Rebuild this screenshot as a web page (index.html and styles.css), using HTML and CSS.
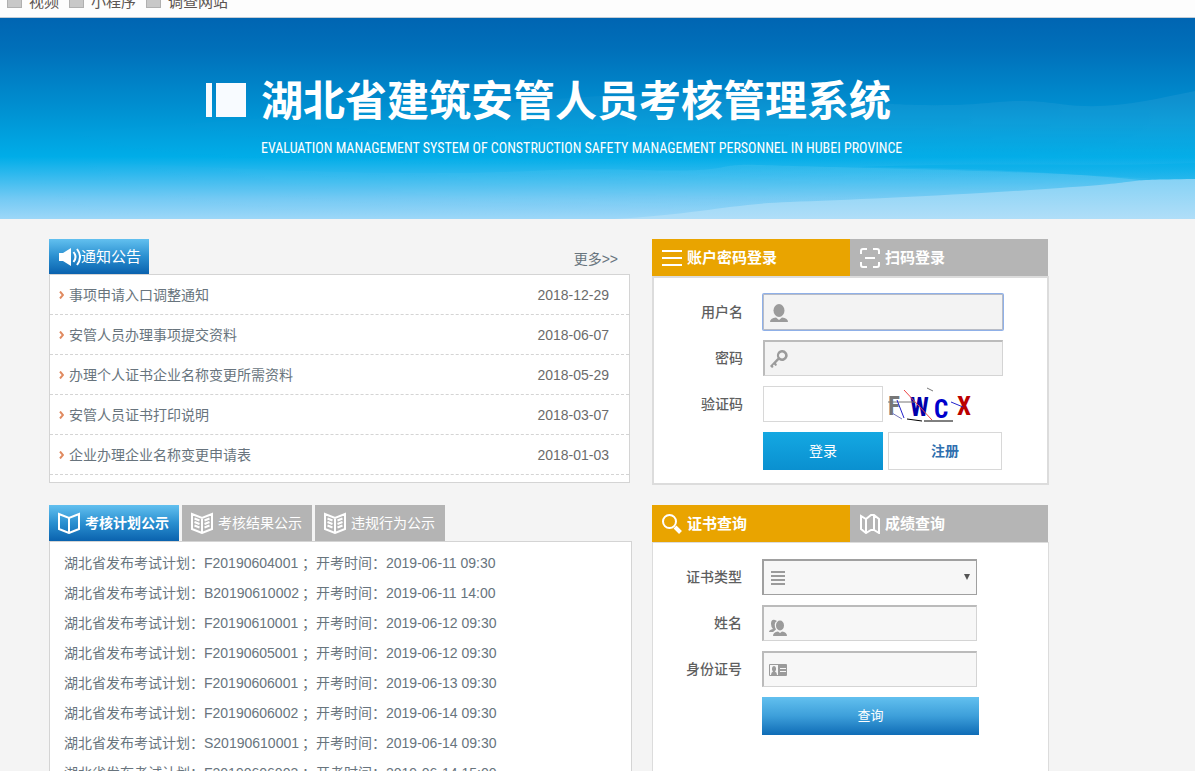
FILE: index.html
```html
<!DOCTYPE html>
<html lang="zh-CN">
<head>
<meta charset="utf-8">
<meta name="viewport" content="width=device-width, initial-scale=1">
<title>湖北省建筑安管人员考核管理系统</title>
<link rel="stylesheet" href="styles.css">
</head>
<body>
<nav class="bookmarks">
  <a class="bookmark" href="#"><span class="bookmark-icon"></span>视频</a>
  <a class="bookmark" href="#"><span class="bookmark-icon"></span>小程序</a>
  <a class="bookmark" href="#"><span class="bookmark-icon"></span>调查网站</a>
</nav>

<header class="hero">
  <svg class="hero-art" viewBox="0 0 1195 201" preserveAspectRatio="none" aria-hidden="true">
    <defs>
      <linearGradient id="sky" x1="0" y1="0" x2="0" y2="1">
        <stop offset="0" stop-color="#0065b2"/>
        <stop offset="0.16" stop-color="#0070ba"/>
        <stop offset="0.45" stop-color="#0090d1"/>
        <stop offset="0.69" stop-color="#00ade8"/>
        <stop offset="0.78" stop-color="#30b9ee"/>
        <stop offset="0.9" stop-color="#74caf4"/>
        <stop offset="1" stop-color="#9dd7f8"/>
      </linearGradient>
      <linearGradient id="far" gradientUnits="userSpaceOnUse" x1="0" y1="60" x2="0" y2="150">
        <stop offset="0" stop-color="#fff" stop-opacity="0.06"/>
        <stop offset="0.5" stop-color="#fff" stop-opacity="0.06"/>
        <stop offset="1" stop-color="#fff" stop-opacity="0"/>
      </linearGradient>
      <linearGradient id="mid" gradientUnits="userSpaceOnUse" x1="0" y1="146" x2="0" y2="201">
        <stop offset="0" stop-color="#fff" stop-opacity="0.12"/>
        <stop offset="1" stop-color="#fff" stop-opacity="0.02"/>
      </linearGradient>
      <linearGradient id="right" gradientUnits="userSpaceOnUse" x1="0" y1="150" x2="0" y2="201">
        <stop offset="0" stop-color="#00ade8"/>
        <stop offset="1" stop-color="#4cc0f0"/>
      </linearGradient>
      <linearGradient id="near" gradientUnits="userSpaceOnUse" x1="0" y1="161" x2="0" y2="201">
        <stop offset="0" stop-color="#86d2f5"/>
        <stop offset="1" stop-color="#b0def8"/>
      </linearGradient>
      <linearGradient id="fade">
        <stop offset="0" stop-color="#000"/>
        <stop offset="0.3" stop-color="#333"/>
        <stop offset="0.7" stop-color="#bbb"/>
        <stop offset="1" stop-color="#fff"/>
      </linearGradient>
      <mask id="fade-in"><rect width="1195" height="201" fill="url(#fade)"/></mask>
    </defs>
    <rect width="1195" height="201" fill="url(#sky)"/>
    <g mask="url(#fade-in)">
      <path d="M0 118 C130 112 240 100 400 92 S620 70 760 78 S900 88 950 87 S1010 79 1060 86 S1150 82 1195 73 V150 H0 Z" fill="url(#far)"/>
      <path d="M0 142 C150 144 260 154 400 155 S540 149 640 152 S710 145 760 147 S940 151 1060 156 S1130 161 1195 162 V201 H0 Z" fill="url(#mid)"/>
    </g>
    <path d="M860 149 C980 150 1080 156 1140 162 L1195 162 V145 C1090 149 980 144 860 149 Z" fill="url(#right)" opacity="0.5"/>
    <path d="M615 201 C700 196 730 186 790 184 S960 177 1060 170 S1110 162 1195 161 V201 Z" fill="url(#near)"/>
  </svg>
  <div class="brand">
    <svg class="brand-mark" viewBox="0 0 40 34" aria-hidden="true"><path d="M0 0h6v34H0zM10 0h30v34H10z"/></svg>
    <div class="brand-text">
      <h1 class="brand-title">湖北省建筑安管人员考核管理系统</h1>
      <p class="brand-sub">EVALUATION MANAGEMENT SYSTEM OF CONSTRUCTION SAFETY MANAGEMENT PERSONNEL IN HUBEI PROVINCE</p>
    </div>
  </div>
</header>

<main class="page">
  <div class="column">
    <section class="notice">
      <div class="notice-head">
        <h2 class="notice-title">
          <svg class="speaker" viewBox="0 0 22 18" aria-hidden="true">
            <path class="fill" d="M0 5h4l8-5v18l-8-5H0z"/>
            <path class="line" d="M14.500 4q4 5 0 10M18 1q6 8 0 16"/>
          </svg>通知公告
        </h2>
        <a class="more" href="#">更多&gt;&gt;</a>
      </div>
      <ul class="notice-list">
        <li class="notice-row"><svg class="chevron" viewBox="0 0 5 8"><path d="M1 0.500 4 4 1 7.500"/></svg><a class="notice-link" href="#">事项申请入口调整通知</a><time>2018-12-29</time></li>
        <li class="notice-row"><svg class="chevron" viewBox="0 0 5 8"><path d="M1 0.500 4 4 1 7.500"/></svg><a class="notice-link" href="#">安管人员办理事项提交资料</a><time>2018-06-07</time></li>
        <li class="notice-row"><svg class="chevron" viewBox="0 0 5 8"><path d="M1 0.500 4 4 1 7.500"/></svg><a class="notice-link" href="#">办理个人证书企业名称变更所需资料</a><time>2018-05-29</time></li>
        <li class="notice-row"><svg class="chevron" viewBox="0 0 5 8"><path d="M1 0.500 4 4 1 7.500"/></svg><a class="notice-link" href="#">安管人员证书打印说明</a><time>2018-03-07</time></li>
        <li class="notice-row"><svg class="chevron" viewBox="0 0 5 8"><path d="M1 0.500 4 4 1 7.500"/></svg><a class="notice-link" href="#">企业办理企业名称变更申请表</a><time>2018-01-03</time></li>
      </ul>
    </section>

    <section class="exams">
      <div class="exam-tabs">
        <button class="exam-tab exam-tab-on" type="button">
          <svg class="tab-icon" viewBox="0 0 22 22" aria-hidden="true"><path d="M1 2v15l10 4 10-4V2l-10 4zM11 6v15"/></svg>考核计划公示
        </button>
        <button class="exam-tab" type="button">
          <svg class="tab-icon" viewBox="0 0 22 22" aria-hidden="true"><path d="M1 2v15l10 4 10-4V2l-10 4zM11 6v15M3.500 6.500l5 2M3.500 10l5 2M3.500 13.500l5 2M18.500 6.500l-5 2M18.500 10l-5 2M18.500 13.500l-5 2"/></svg>考核结果公示
        </button>
        <button class="exam-tab" type="button">
          <svg class="tab-icon" viewBox="0 0 22 22" aria-hidden="true"><path d="M1 2v15l10 4 10-4V2l-10 4zM11 6v15M3.500 6.500l5 2M3.500 10l5 2M3.500 13.500l5 2M18.500 6.500l-5 2M18.500 10l-5 2M18.500 13.500l-5 2"/></svg>违规行为公示
        </button>
      </div>
      <ul class="exam-list">
        <li><a class="exam-row" href="#">湖北省发布考试计划：<span class="code">F20190604001</span>；开考时间：2019-06-11 09:30</a></li>
        <li><a class="exam-row" href="#">湖北省发布考试计划：<span class="code">B20190610002</span>；开考时间：2019-06-11 14:00</a></li>
        <li><a class="exam-row" href="#">湖北省发布考试计划：<span class="code">F20190610001</span>；开考时间：2019-06-12 09:30</a></li>
        <li><a class="exam-row" href="#">湖北省发布考试计划：<span class="code">F20190605001</span>；开考时间：2019-06-12 09:30</a></li>
        <li><a class="exam-row" href="#">湖北省发布考试计划：<span class="code">F20190606001</span>；开考时间：2019-06-13 09:30</a></li>
        <li><a class="exam-row" href="#">湖北省发布考试计划：<span class="code">F20190606002</span>；开考时间：2019-06-14 09:30</a></li>
        <li><a class="exam-row" href="#">湖北省发布考试计划：<span class="code">S20190610001</span>；开考时间：2019-06-14 09:30</a></li>
        <li><a class="exam-row" href="#">湖北省发布考试计划：<span class="code">F20190606003</span>；开考时间：2019-06-14 15:00</a></li>
      </ul>
    </section>
  </div>

  <div class="column">
    <section class="login">
      <div class="side-tabs">
        <button class="side-tab side-tab-on" type="button">
          <svg class="side-icon" viewBox="0 0 20 20" aria-hidden="true"><path d="M0 3h20M0 10h20M0 17h20"/></svg>账户密码登录
        </button>
        <button class="side-tab" type="button">
          <svg class="side-icon" viewBox="0 0 20 20" aria-hidden="true"><path d="M1 6V3q0-2 2-2h4M13 1h4q2 0 2 2v3M19 14v3q0 2-2 2h-4M7 19H3q-2 0-2-2v-3M5 10h10"/></svg>扫码登录
        </button>
      </div>
      <form class="form login-form">
        <label class="form-label" for="user">用户名</label>
        <div class="field">
          <input class="input input-focus" id="user" type="text">
          <svg class="field-icon" viewBox="0 0 18 18" aria-hidden="true"><ellipse cx="9" cy="6.500" rx="5.500" ry="6.500"/><path d="M0 18q0-4 6-4.500l3 2.500 3-2.500q6 .5 6 4.500z"/></svg>
        </div>
        <label class="form-label" for="pass">密码</label>
        <div class="field">
          <input class="input" id="pass" type="password">
          <svg class="field-icon" viewBox="0 0 18 18" aria-hidden="true"><path fill-rule="evenodd" d="M12 0a5.500 5.500 0 1 1-3 10l-3 3 1 2-1.500 1-1.500-1.500-1 1 .5 1.500L2 18l-2-2L7.500 8A5.500 5.500 0 0 1 12 0zm0 2.500a3 3 0 1 0 .1 0z"/></svg>
        </div>
        <label class="form-label" for="captcha">验证码</label>
        <div class="pair">
          <input class="input input-plain" id="captcha" type="text">
          <svg class="captcha" viewBox="0 0 90 36" role="img" aria-label="验证码图片">
            <text class="captcha-char" x="0" y="29" fill="#777">F</text>
            <text class="captcha-char" x="22" y="30" fill="#00a">W</text>
            <text class="captcha-char" x="46" y="32" fill="#00c">C</text>
            <text class="captcha-char" x="69" y="29" fill="#b00">X</text>
            <path d="M0 16h27M39 2l6 3" stroke="#777"/>
            <path d="M16 4l28 30" stroke="#e44"/>
            <path d="M9 14l7 18M63 16l12 5" stroke="#22c"/>
            <path d="M4 27l10 6" stroke="#77b"/>
            <path d="M19 33l15 2M36 35h29" stroke="#000"/>
          </svg>
        </div>
        <div class="pair form-actions">
          <button class="btn btn-login" type="button">登录</button>
          <button class="btn btn-register" type="button">注册</button>
        </div>
      </form>
    </section>

    <section class="query">
      <div class="side-tabs">
        <button class="side-tab side-tab-on" type="button">
          <svg class="side-icon" viewBox="0 0 20 20" aria-hidden="true"><circle cx="7.500" cy="7.500" r="6.500"/><path d="M13 13l5.500 5.500" stroke-width="4"/></svg>证书查询
        </button>
        <button class="side-tab" type="button">
          <svg class="side-icon" viewBox="0 0 20 20" aria-hidden="true"><path d="M1 2v13l5 4 5-3h3l5 3V5l-5-4h-3L6 5zM6 5v14M14 1v15"/></svg>成绩查询
        </button>
      </div>
      <form class="form query-form">
        <label class="form-label" for="type">证书类型</label>
        <div class="field">
          <select class="input select" id="type"><option></option></select>
          <svg class="field-icon" viewBox="0 0 18 18" aria-hidden="true"><path d="M2 2h14v2H2zM2 6h14v2H2zM2 10h14v2H2zM2 14h14v2H2z"/></svg>
          <svg class="select-arrow" viewBox="0 0 6 6" aria-hidden="true"><path d="M0 0h6L3 6z"/></svg>
        </div>
        <label class="form-label" for="name">姓名</label>
        <div class="field">
          <input class="input" id="name" type="text">
          <svg class="field-icon field-icon-low" viewBox="0 0 18 18" aria-hidden="true"><path d="M6 1q-4-1-4 4 0 3 2 5-4 1-4 3h4l3-2.500Q4 4 8 2z"/><ellipse cx="11" cy="6.500" rx="4" ry="5"/><path d="M4 17q0-4 5-4.500l2 1.500 2-1.500q5 .5 5 4.500z"/></svg>
        </div>
        <label class="form-label" for="idno">身份证号</label>
        <div class="field">
          <input class="input" id="idno" type="text">
          <svg class="field-icon" viewBox="0 0 18 18" aria-hidden="true"><path fill-rule="evenodd" d="M1 3h16q1 0 1 1v10q0 1-1 1H1q-1 0-1-1V4q0-1 1-1zM1 4v10h1q0-3 2-3.500Q2.500 9 3 7q.5-2 2-2t2 2q.5 2-1 3.500 2 .5 2 3.500h1V4zM11 7v1h6V7zM11 10v1h6v-1z"/></svg>
        </div>
        <button class="btn btn-query" type="button">查询</button>
      </form>
    </section>
  </div>
</main>
</body>
</html>
```

FILE: styles.css
```css
* {
  box-sizing: border-box;
}

body {
  margin: 0;
  height: 100vh;
  overflow: hidden;
  display: flex;
  flex-direction: column;
  background: #f4f4f4;
  color: #6b6b6b;
  font: 14px/20px "Liberation Sans", "Noto Sans CJK SC", sans-serif;
}

h1, h2, p, ul {
  margin: 0;
  padding: 0;
  list-style: none;
  font-weight: 400;
}

a {
  color: inherit;
  text-decoration: none;
}

button, input, select {
  font: inherit;
  margin: 0;
}

svg {
  display: block;
  flex: none;
}

.bookmarks {
  flex: none;
  height: 18px;
  display: flex;
  align-items: flex-end;
  gap: 10px;
  padding: 0 7px 5px;
  background: #fdfdfd;
  border-bottom: 1px solid #c4cdd6;
  color: #5c5552;
  font-size: 15px;
}

.bookmark {
  display: flex;
  align-items: center;
  gap: 7px;
}

.bookmark-icon {
  width: 15px;
  height: 15px;
  margin-bottom: 4px;
  background: #c8c8c8;
  border: 1px solid #b0b0b0;
}

.hero {
  flex: none;
  position: relative;
  height: 201px;
  padding: 60px 0 0 206px;
}

.hero-art {
  position: absolute;
  inset: 0;
  width: 100%;
  height: 100%;
}

.brand {
  position: relative;
  display: flex;
  gap: 15px;
  color: #fff;
}

.brand-mark {
  width: 40px;
  height: 34px;
  margin-top: 5px;
  fill: #f8fbff;
}

.brand-title {
  font-size: 42px;
  line-height: 48px;
  font-weight: 700;
}

.brand-sub {
  margin-top: 12px;
  font-family: "Roboto Condensed", "Liberation Sans", sans-serif;
  font-size: 14px;
  line-height: 20px;
  white-space: nowrap;
}

.page {
  flex: 1;
  display: grid;
  grid-template-columns: 583fr 397fr;
  column-gap: 20px;
  max-width: 1049px;
  padding: 20px 0 0 49px;
}

.column {
  display: flex;
  flex-direction: column;
}

.notice {
  margin: 0 2px 22px 0;
}

.notice-head {
  display: flex;
  justify-content: space-between;
  align-items: flex-end;
  height: 35px;
  padding-right: 12px;
}

.notice-title {
  display: flex;
  align-items: center;
  width: 100px;
  height: 35px;
  padding-left: 10px;
  background: linear-gradient(#62c0ef, #2a8fd0 50%, #0a62ae);
  color: #fff;
  font-size: 15px;
}

.speaker {
  width: 22px;
  height: 18px;
}

.speaker .fill {
  fill: #fff;
}

.speaker .line {
  fill: none;
  stroke: #fff;
  stroke-width: 2;
}

.more {
  padding-bottom: 5px;
  color: #68747d;
}

.notice-list {
  padding-bottom: 7px;
  background: #fff;
  border: 1px solid #d4d4d4;
}

.notice-row {
  display: flex;
  align-items: center;
  height: 40px;
  padding: 0 20px 0 9px;
  border-bottom: 1px dashed #d4d4d4;
}

.chevron {
  width: 5px;
  height: 8px;
  margin-right: 5px;
  fill: none;
  stroke: #e08a60;
  stroke-width: 2;
}

.notice-link {
  flex: 1;
  color: #68747d;
}

.exams {
  flex: 1;
}

.exam-tabs {
  display: flex;
  gap: 3px;
}

.exam-tab {
  display: flex;
  align-items: center;
  gap: 5px;
  width: 130px;
  height: 36px;
  padding: 0 0 0 9px;
  border: 0;
  background: #b4b4b4;
  color: #fff;
  white-space: nowrap;
}

.exam-tab-on {
  background: linear-gradient(#62c0ef, #2a8fd0 50%, #0a62ae);
  font-weight: 700;
}

.tab-icon {
  width: 22px;
  height: 22px;
  fill: none;
  stroke: #fff;
  stroke-width: 2;
}

.exam-list {
  padding: 6px 14px;
  background: #fff;
  border: 1px solid #d4d4d4;
}

.exam-row {
  display: block;
  line-height: 30px;
  color: #68747d;
  white-space: nowrap;
}

.code {
  display: inline-block;
  min-width: 98px;
}

.side-tabs {
  display: grid;
  grid-template-columns: 1fr 1fr;
  padding-right: 1px;
}

.side-tab {
  display: flex;
  align-items: center;
  gap: 5px;
  height: 37px;
  padding: 0 10px;
  border: 0;
  background: #b5b5b5;
  color: #fff;
  font-size: 15px;
  font-weight: 700;
}

.side-tab-on {
  background: #e9a400;
}

.side-icon {
  width: 20px;
  height: 20px;
  fill: none;
  stroke: #fff;
  stroke-width: 2;
}

.login {
  margin-bottom: 20px;
}

.query {
  flex: 1;
  display: flex;
  flex-direction: column;
}

.form {
  display: grid;
  grid-template-columns: 89px 1fr;
  gap: 10px 20px;
  align-content: start;
  align-items: center;
  background: #fff;
}

.login-form {
  padding: 16px 44px 13px 0;
  border: 2px solid #dcdcdc;
}

.query-form {
  flex: 1;
  padding: 16px 69px 13px 0;
  border: 1px solid #dcdcdc;
}

.form-label {
  text-align: right;
  font-weight: 500;
  color: #5f5f5f;
}

.field {
  position: relative;
  height: 36px;
}

.query-form .field {
  margin-right: 2px;
}

.input {
  width: 100%;
  height: 36px;
  padding: 0 10px 0 34px;
  border: solid;
  border-width: 2px 1px 1px 2px;
  border-color: #bbb #d4d4d4 #d4d4d4 #bbb;
  border-radius: 0;
  background: #f3f3f3;
  outline: 0;
}

.query-form .input {
  background: #f7f7f7;
}

.input-focus {
  border: 1px solid #b8bcc6;
  border-radius: 1px;
  box-shadow: 0 0 0 1px #8fb0e8;
}

.field-icon {
  position: absolute;
  left: 7px;
  top: 10px;
  width: 18px;
  height: 18px;
  fill: #9b9b9b;
}

.field-icon-low {
  top: 14px;
}

.query-form .select {
  appearance: none;
  border-color: #a0a0a0;
}

.select-arrow {
  position: absolute;
  right: 7px;
  top: 15px;
  width: 6px;
  height: 6px;
  fill: #555;
}

.pair {
  display: flex;
  align-items: center;
  gap: 5px;
}

.input-plain {
  width: 120px;
  padding: 0 10px;
  border: 1px solid #d8d8d8;
  background: #fff;
}

.login-form .input-plain {
  background: #fff;
}

.captcha {
  width: 90px;
  height: 36px;
  fill: none;
}

.captcha-char {
  font: 700 25px "Roboto Condensed", "Liberation Sans", sans-serif;
}

.form-actions {
  grid-column: 2;
}

.btn {
  height: 38px;
  padding: 0;
  border: 0;
  color: #fff;
}

.btn-login {
  width: 120px;
  background: linear-gradient(#14a8e2, #0a90d0);
}

.btn-register {
  width: 114px;
  background: #fff;
  border: 1px solid #d8d8d8;
  color: #2f6fae;
  font-weight: 700;
}

.btn-query {
  grid-column: 2;
  background: linear-gradient(#62c0ef, #3d9fda 50%, #0f6cb6);
  font-size: 13px;
}
```
